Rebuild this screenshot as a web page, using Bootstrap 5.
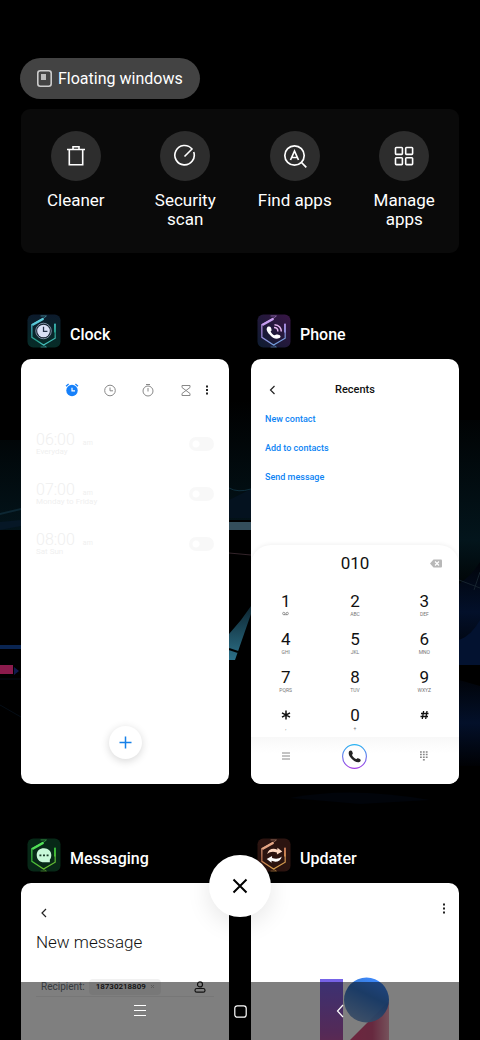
<!DOCTYPE html>
<html lang="en">
<head>
<meta charset="utf-8">
<meta name="viewport" content="width=device-width, initial-scale=1">
<title>Recent apps</title>
<link rel="stylesheet" href="https://cdn.jsdelivr.net/npm/bootstrap@5.3.0/dist/css/bootstrap.min.css">
<style>
body{background:#000;color:#fff;font-family:Roboto,"Liberation Sans",sans-serif;font-size:16px;line-height:20px}
button,input{font-family:inherit;color:inherit}
svg{display:block;flex:none}
.plain{border:0;background:none;padding:0}
.screen{height:100vh;padding:58px 21px 0;z-index:0}
.wallpaper{inset:0;width:100%;height:100%;z-index:-1}
.float-pill{height:41px;margin-left:-1px;padding:0 17px;gap:6px;background:#434343;font-size:16px}
.tools{margin-top:10px;min-height:144px;padding-top:22px;background:#0a0a0a;border-radius:9px;font-size:17px;line-height:19px}
.tool{flex:1 1 0;min-width:0}
.tool-label{width:76px;margin-top:10px}
.disc{width:50px;height:50px;background:#2d2d2d}
.apps{display:grid;grid-template-columns:1fr 1fr;column-gap:22px;row-gap:54px;margin-top:61px}
.app-head{height:34px;gap:9px;padding-left:6px;margin-bottom:11px;color:#fff}
.app-title{font-size:16px;font-weight:500;line-height:20px;margin:7px 0 0}
.pane{background:#fff;color:#111;border-radius:10px;min-height:425px;overflow:hidden}
.tabs{padding:24px 17px 0 44px}
.tab-set{gap:24px}
.alarms{margin-top:25px;padding:0 15px}
.alarm{height:50px;color:#efefef;padding-bottom:6px}
.alarm-time{font-size:16px;font-weight:300;line-height:16px}
.tiny{font-size:7px;line-height:8px}
.alarm-days{font-size:8px;line-height:8px}
.toggle{appearance:none;width:25px;height:14px;margin:0;border-radius:7px;background:radial-gradient(circle at 7px 7px,#fff 3px,#f8f8f8 4px)}
.fab{width:33px;height:33px;margin-bottom:25px;background:#fff;box-shadow:0 2px 9px rgba(0,0,0,.16)}
.pane-bar{display:grid;grid-template-columns:1fr auto 1fr;height:30px;margin-top:16px;padding:0 18px;font-size:11px;font-weight:500}
.actions{padding:0 14px}
.action{font-size:9px;font-weight:500;line-height:29px;color:#0d84f4;text-decoration:none}
.dialer{border-radius:20px 20px 0 0;box-shadow:0 -1px 4px rgba(0,0,0,.06)}
.dial-row{display:grid;grid-template-columns:1fr 1fr 1fr;height:40px;padding-bottom:4px}
.dial-number{font-size:17px;line-height:20px;min-width:0}
.keys{display:grid;grid-template-columns:1fr 1fr 1fr;grid-auto-rows:38px}
.digit{font-size:17px;line-height:20px;padding-top:6px;height:26px}
.letters{font-size:5px;line-height:6px;color:#777}
.dial-foot{display:grid;grid-template-columns:1fr 1fr 1fr;height:47px;padding-bottom:9px;background:linear-gradient(#f8f8f8,#fff 16px)}
.call{width:25px;height:25px}
.msg{padding:25px 15px 0}
.msg-title{font-size:17px;font-weight:300;line-height:20px;margin:14px 0 25px}
.recipient{height:20px;border-bottom:1px solid #eee;padding:0 8px 0 5px;font-size:10px;line-height:12px;gap:4px}
.chip{background:#f1f1f1;border-radius:4px;height:16px;padding:0 6px 0 7px}
.chip-number{width:54px;font-size:8px;font-weight:500}
.update-logo{margin-top:62px}
.close-all{width:62px;height:62px;left:50%;bottom:123px;margin-left:-31px;background:#fff;color:#000;z-index:3;box-shadow:0 6px 24px rgba(0,0,0,.1)}
.sysbar{position:fixed;left:0;right:0;bottom:0;height:58px;padding:0 90px;background:rgba(0,0,0,.5);z-index:2}
.sysbar .btn-cell{flex:1 1 0}
</style>
</head>
<body>
<svg width="0" height="0" class="position-absolute" aria-hidden="true">
  <defs>
    <linearGradient id="gc" gradientUnits="userSpaceOnUse" x1="6" y1="0" x2="20" y2="35"><stop offset="0" stop-color="#8cf0ff"/><stop offset=".35" stop-color="#48b9c8"/><stop offset=".7" stop-color="#249e88"/><stop offset="1" stop-color="#59d5dc"/></linearGradient>
    <linearGradient id="gp" gradientUnits="userSpaceOnUse" x1="6" y1="0" x2="20" y2="35"><stop offset="0" stop-color="#e6b2ff"/><stop offset=".5" stop-color="#a98be0"/><stop offset="1" stop-color="#63a4dc"/></linearGradient>
    <linearGradient id="gm" gradientUnits="userSpaceOnUse" x1="6" y1="0" x2="20" y2="35"><stop offset="0" stop-color="#6cff74"/><stop offset=".5" stop-color="#35bd39"/><stop offset="1" stop-color="#79bd31"/></linearGradient>
    <linearGradient id="gu" gradientUnits="userSpaceOnUse" x1="6" y1="0" x2="20" y2="35"><stop offset="0" stop-color="#ffd0b2"/><stop offset=".5" stop-color="#c87955"/><stop offset="1" stop-color="#dba94b"/></linearGradient>
    <linearGradient id="ring" x1="0" y1="0" x2="0" y2="1"><stop offset="0" stop-color="#27b3f2"/><stop offset="1" stop-color="#a43be4"/></linearGradient>
    <linearGradient id="tileC" x1="0" y1="0" x2="0" y2="1"><stop offset="0" stop-color="#0c1a2c"/><stop offset="1" stop-color="#062c27"/></linearGradient>
    <linearGradient id="tileP" x1="1" y1="0" x2="0" y2="1"><stop offset="0" stop-color="#381545"/><stop offset="1" stop-color="#0d1c30"/></linearGradient>
    <g id="hex" fill="none">
      <path d="M17 4 5 11v13l12 8 12-7V10" stroke-width="1.200"/>
      <path d="M5.500 11.500 17 5" stroke-width="2.200"/><path d="M28.700 10v9" stroke-width="1.800"/>
      <path d="M14 2h6l-3 2.500M14 34h6l-3-2" stroke-width=".8" opacity=".6"/>
    </g>
  </defs>
</svg>

<main class="screen position-relative overflow-hidden">
  <svg class="wallpaper position-absolute" viewBox="0 0 480 1040" preserveAspectRatio="xMidYMid slice" aria-hidden="true">
    <defs>
      <linearGradient id="w1" x1="0" y1="0" x2="0" y2="1"><stop offset="0" stop-color="#000"/><stop offset=".7" stop-color="#03151c"/><stop offset="1" stop-color="#000"/></linearGradient>
      <linearGradient id="w2" x1="0" y1="0" x2="0" y2="1"><stop offset="0" stop-color="#01040a"/><stop offset=".5" stop-color="#03102a"/><stop offset="1" stop-color="#000104"/></linearGradient>
      <linearGradient id="w3" x1="0" y1="0" x2="0" y2="1"><stop offset="0" stop-color="#0d2530"/><stop offset="1" stop-color="#2c7088"/></linearGradient>
    </defs>
    <path d="M0 440h21v90H0zM229 400h22v120h-22zM459 420h21v180h-21z" fill="url(#w1)"/>
    <path d="M0 513 21 508v2L0 515z" fill="#0d2733"/><path d="M0 522l21-2v6L0 530z" fill="#061726"/>
    <path d="M229 500l22-11v29h-22z" fill="#04121f"/>
    <path d="M229 488q9 5 22 1" stroke="#10303e" fill="none"/>
    <path d="M229 522h22v8h-22z" fill="#344e5b"/>
    <path d="M229 553l22 2" stroke="#33242a"/>
    <path d="M0 645h21v4H0z" fill="#0a2552"/>
    <path d="M0 665h13v9H0z" fill="#8b1b4c"/><path d="M14 667l5 4-5 4z" fill="#101a4d"/>
    <path d="M0 679h21M0 705l21 12" stroke="#050d16"/>
    <path d="M229 634 241 620 251 606v8l-16 46h-6z" fill="url(#w3)"/><path d="M229 649l9 3" stroke="#000" stroke-width="2"/>
    <path d="M459 584q12-8 21-22v100h-21z" fill="url(#w2)"/><path d="M459 640q12-4 21-20v45h-21z" fill="#031230"/>
    <path d="M459 680l21 6v80h-21z" fill="url(#w2)"/>
    <path d="M459 580l21 8M474 590l6-18" stroke="#16232e"/>
    <path d="M290 798q60-12 140 2l-70 4z" fill="#01040a"/>
  </svg>

  <button type="button" class="plain float-pill rounded-pill d-inline-flex align-items-center">
    <svg width="15" height="17" viewBox="0 0 15 17" fill="none" aria-hidden="true"><rect x=".8" y=".8" width="13.400" height="15.400" rx="2.500" stroke="#ccc" stroke-width="1.600"/><rect x="4" y="4" width="5" height="6" fill="#bbb"/></svg>
    Floating windows
  </button>

  <section class="tools d-flex align-items-start text-center" aria-label="Tools">
    <button type="button" class="plain tool d-flex flex-column align-items-center">
      <span class="disc rounded-circle d-flex align-items-center justify-content-center"><svg width="24" height="24" viewBox="0 0 24 24" fill="none" stroke="#fff" stroke-width="1.600" aria-hidden="true"><path d="M3 5.500h18M9 5V2.700h6V5M5.300 6v14.800h13.400V6"/></svg></span>
      <span class="tool-label">Cleaner</span>
    </button>
    <button type="button" class="plain tool d-flex flex-column align-items-center">
      <span class="disc rounded-circle d-flex align-items-center justify-content-center"><svg width="24" height="24" viewBox="0 0 24 24" fill="none" stroke="#fff" stroke-width="1.600" aria-hidden="true"><path d="M11.500 12.500 19 5A9.700 9.700 0 1 0 20.700 8"/></svg></span>
      <span class="tool-label">Security scan</span>
    </button>
    <button type="button" class="plain tool d-flex flex-column align-items-center">
      <span class="disc rounded-circle d-flex align-items-center justify-content-center"><svg width="24" height="24" viewBox="0 0 24 24" fill="none" stroke="#fff" stroke-width="1.700" aria-hidden="true"><circle cx="11.500" cy="11.500" r="9.700"/><path d="m18.500 18.500 4.800 4.800M7.500 16 11.500 7l4 9M9 13.500h5"/></svg></span>
      <span class="tool-label text-nowrap">Find apps</span>
    </button>
    <button type="button" class="plain tool d-flex flex-column align-items-center">
      <span class="disc rounded-circle d-flex align-items-center justify-content-center"><svg width="24" height="24" viewBox="0 0 24 24" fill="none" stroke="#fff" stroke-width="1.600" aria-hidden="true"><rect x="3.500" y="3.500" width="6.900" height="6.900" rx=".8"/><rect x="13.700" y="3.500" width="6.900" height="6.900" rx=".8"/><rect x="3.500" y="13.700" width="6.900" height="6.900" rx=".8"/><rect x="13.700" y="13.700" width="6.900" height="6.900" rx=".8"/></svg></span>
      <span class="tool-label">Manage apps</span>
    </button>
  </section>

  <div class="apps">
    <article class="d-flex flex-column">
      <header class="app-head d-flex align-items-center">
        <svg width="34" height="34" viewBox="0 0 35 35" aria-hidden="true"><rect x=".5" y=".5" width="34" height="34" rx="6" fill="url(#tileC)"/><use href="#hex" stroke="url(#gc)"/><circle cx="17" cy="17.500" r="8" fill="#14202e" stroke="#9bacc5" stroke-width=".8"/><circle cx="17" cy="17.500" r="6.500" fill="#d9dff5"/><path d="M17 13v5h4" fill="none" stroke="#253148" stroke-width="1.300"/></svg>
        <h2 class="app-title">Clock</h2>
      </header>
      <div class="pane flex-grow-1 d-flex flex-column">
        <div class="tabs d-flex align-items-center justify-content-between">
          <div class="tab-set d-flex">
            <button class="plain" type="button" aria-label="Alarm"><svg width="14" height="14" viewBox="0 0 14 14"><circle cx="7" cy="7.500" r="5.700" fill="#1680fa"/><path d="M1 3.200 3.600 1M13 3.200 10.400 1" stroke="#1680fa" stroke-width="1.300"/><path d="M7 4.700v3.200h3" fill="none" stroke="#fff" stroke-width="1.200"/></svg></button>
            <button class="plain" type="button" aria-label="World clock"><svg width="14" height="14" viewBox="0 0 14 14" fill="none" stroke="#888"><circle cx="7" cy="7.500" r="5.300"/><path d="M7 4.500v3.300h3"/></svg></button>
            <button class="plain" type="button" aria-label="Stopwatch"><svg width="14" height="14" viewBox="0 0 14 14" fill="none" stroke="#888"><circle cx="7" cy="8" r="5"/><path d="M7 5v3.500M5 1.500h4"/></svg></button>
            <button class="plain" type="button" aria-label="Timer"><svg width="14" height="14" viewBox="0 0 14 14" fill="none" stroke="#888"><path d="M3 2.500h8v2L7 7.500l-4-3zM3 12.500h8v-2L7 7.500l-4 3z"/></svg></button>
          </div>
          <button class="plain" type="button" aria-label="More options"><svg width="10" height="14" viewBox="0 0 10 14"><path d="M4 2.500h2v2H4zM4 6h2v2H4zM4 9.500h2v2H4z" fill="#222"/></svg></button>
        </div>
        <div class="alarms">
          <div class="alarm d-flex align-items-center justify-content-between"><label class="d-flex flex-wrap align-items-baseline column-gap-1" for="a6"><span class="alarm-time">06:00</span><span class="tiny ms-1">am</span><span class="alarm-days w-100">Everyday</span></label><input class="toggle" type="checkbox" role="switch" id="a6"></div>
          <div class="alarm d-flex align-items-center justify-content-between"><label class="d-flex flex-wrap align-items-baseline column-gap-1" for="a7"><span class="alarm-time">07:00</span><span class="tiny ms-1">am</span><span class="alarm-days w-100">Monday to Friday</span></label><input class="toggle" type="checkbox" role="switch" id="a7"></div>
          <div class="alarm d-flex align-items-center justify-content-between"><label class="d-flex flex-wrap align-items-baseline column-gap-1" for="a8"><span class="alarm-time">08:00</span><span class="tiny ms-1">am</span><span class="alarm-days w-100">Sat Sun</span></label><input class="toggle" type="checkbox" role="switch" id="a8"></div>
        </div>
        <button type="button" class="plain fab rounded-circle mt-auto mx-auto d-flex align-items-center justify-content-center" aria-label="Add alarm"><svg width="13" height="13" viewBox="0 0 13 13" stroke="#1680e8" stroke-width="1.500"><path d="M.5 6.500h12M6.500.5v12"/></svg></button>
      </div>
    </article>

    <article class="d-flex flex-column">
      <header class="app-head d-flex align-items-center">
        <svg width="34" height="34" viewBox="0 0 35 35" aria-hidden="true"><rect x=".5" y=".5" width="34" height="34" rx="6" fill="url(#tileP)"/><use href="#hex" stroke="url(#gp)"/><path d="M11 13c3-1 4 1 4 4l-1 1c1 2 2 3 4 4l2-1c3 0 5 1 4 3-3 3-8 1-11-3-3-3-4-6-2-8z" fill="#fff"/><path d="M17.500 14c3 0 4 2 4 4M18 11c5 0 7 4 7 7" fill="none" stroke="#e7b7f1" stroke-width="1.500"/></svg>
        <h2 class="app-title">Phone</h2>
      </header>
      <div class="pane flex-grow-1 d-flex flex-column">
        <div class="pane-bar align-items-center">
          <button type="button" class="plain text-start" aria-label="Back"><svg width="8" height="10" viewBox="0 0 8 10" fill="none" stroke="#222" stroke-width="1.200"><path d="M5.500 1 1.500 5l4 4"/></svg></button>
          <span>Recents</span>
        </div>
        <nav class="actions d-flex flex-column align-items-start" aria-label="Number actions">
          <a class="action" href="#">New contact</a>
          <a class="action" href="#">Add to contacts</a>
          <a class="action" href="#">Send message</a>
        </nav>
        <div class="dialer mt-auto">
          <div class="dial-row align-items-center">
            <span></span>
            <input class="plain dial-number text-center" value="010" aria-label="Number" readonly>
            <button type="button" class="plain d-flex justify-content-center ps-4" aria-label="Delete digit"><svg width="12" height="9" viewBox="0 0 12 9"><path d="M0 4.500 3.500.5H11q1 0 1 1v6q0 1-1 1H3.500z" fill="#b8b8b8"/><path d="m5 2.500 4 4M9 2.500l-4 4" stroke="#fff" stroke-width="1.200"/></svg></button>
          </div>
          <div class="keys">
            <button type="button" class="plain d-flex flex-column align-items-center"><span class="digit">1</span><svg width="7" height="5" viewBox="0 0 7 5" fill="none" stroke="#777" stroke-width=".7" aria-hidden="true"><circle cx="1.800" cy="2.500" r="1.200"/><circle cx="5.200" cy="2.500" r="1.200"/><path d="M1.800 3.700h3.400"/></svg></button>
            <button type="button" class="plain d-flex flex-column align-items-center"><span class="digit">2</span><span class="letters">ABC</span></button>
            <button type="button" class="plain d-flex flex-column align-items-center"><span class="digit">3</span><span class="letters">DEF</span></button>
            <button type="button" class="plain d-flex flex-column align-items-center"><span class="digit">4</span><span class="letters">GHI</span></button>
            <button type="button" class="plain d-flex flex-column align-items-center"><span class="digit">5</span><span class="letters">JKL</span></button>
            <button type="button" class="plain d-flex flex-column align-items-center"><span class="digit">6</span><span class="letters">MNO</span></button>
            <button type="button" class="plain d-flex flex-column align-items-center"><span class="digit">7</span><span class="letters">PQRS</span></button>
            <button type="button" class="plain d-flex flex-column align-items-center"><span class="digit">8</span><span class="letters">TUV</span></button>
            <button type="button" class="plain d-flex flex-column align-items-center"><span class="digit">9</span><span class="letters">WXYZ</span></button>
            <button type="button" class="plain d-flex flex-column align-items-center" aria-label="Star"><span class="digit d-flex align-items-center"><svg width="10" height="10" viewBox="0 0 10 10" stroke="#111" stroke-width="1.500"><path d="M5 .5v9M1 2.800l8 4.400M9 2.800 1 7.200"/></svg></span><span class="letters">,</span></button>
            <button type="button" class="plain d-flex flex-column align-items-center"><span class="digit">0</span><span class="letters">+</span></button>
            <button type="button" class="plain d-flex flex-column align-items-center" aria-label="Hash"><span class="digit d-flex align-items-center"><svg width="9" height="10" viewBox="0 0 9 10" stroke="#111" stroke-width="1.300"><path d="M3.600 1 2.300 9M7 1 5.700 9M1 3.500h7.500M.5 6.500H8"/></svg></span></button>
          </div>
          <div class="dial-foot">
            <button type="button" class="plain d-flex align-items-center justify-content-center" aria-label="Menu"><svg width="8" height="8" viewBox="0 0 8 8" stroke="#888"><path d="M0 1h8M0 4h8M0 7h8"/></svg></button>
            <button type="button" class="plain d-flex align-items-center justify-content-center" aria-label="Call"><svg class="call" viewBox="0 0 25 25"><circle cx="12.500" cy="12.500" r="11.900" fill="none" stroke="url(#ring)" stroke-width="1.100"/><path d="M7 7.500c1-1.500 2.700-1.300 3.200 0l.6 1.700c.2.800-.8 1.300-.8 1.800.7 1.800 2.200 3.200 4 4 .7 0 1.200-1 2-.7l1.900.8c1.300.8 1 2.400-.5 3-2.400.8-5.700-1-8-3.500C7.200 12.300 6 9.400 7 7.500z" fill="#222"/></svg></button>
            <button type="button" class="plain d-flex align-items-center justify-content-center" aria-label="Hide keypad"><svg width="8" height="10" viewBox="0 0 8 10" stroke="#888" stroke-width="1.500" stroke-dasharray="1.800 1.100"><path d="M0 1h8M0 3.600h8M0 6.200h8"/><path d="M2.900 8.800h1.900" stroke-dasharray="none"/></svg></button>
          </div>
        </div>
      </div>
    </article>

    <article class="d-flex flex-column">
      <header class="app-head d-flex align-items-center">
        <svg width="34" height="34" viewBox="0 0 35 35" aria-hidden="true"><rect x=".5" y=".5" width="34" height="34" rx="6" fill="#072817"/><use href="#hex" stroke="url(#gm)"/><path d="M17.500 10.500c4.500 0 7.500 3 7.500 7 0 3-1 4-1.500 5v2.500h-6c-4.500 0-7.500-3-7.500-7.500s3-7 7.500-7z" fill="#c8f8d9"/><path d="M12.800 18h2M16.500 18h2M20.200 18h2" stroke="#153525" stroke-width="1.800"/></svg>
        <h2 class="app-title">Messaging</h2>
      </header>
      <div class="pane flex-grow-1">
        <div class="msg">
          <button type="button" class="plain d-block ps-1" aria-label="Back"><svg width="8" height="10" viewBox="0 0 8 10" fill="none" stroke="#222" stroke-width="1.200"><path d="M6 1 2 5l4 4"/></svg></button>
          <h3 class="msg-title">New message</h3>
          <div class="recipient d-flex align-items-center">
            <label for="to" class="text-secondary">Recipient:</label>
            <span class="chip d-flex align-items-center"><input id="to" class="plain chip-number" value="18730218809"><button type="button" class="plain" aria-label="Remove recipient"><svg width="5" height="5" viewBox="0 0 5 5" stroke="#bbb"><path d="m1 1 3 3M4 1 1 4"/></svg></button></span>
            <button type="button" class="plain ms-auto" aria-label="Choose contact"><svg width="12" height="12" viewBox="0 0 12 12" fill="none" stroke="#222" stroke-width="1.200"><circle cx="6" cy="3.400" r="2.500"/><rect x="1" y="7.500" width="10" height="3.700" rx="1.800"/></svg></button>
          </div>
        </div>
      </div>
    </article>

    <article class="d-flex flex-column">
      <header class="app-head d-flex align-items-center">
        <svg width="34" height="34" viewBox="0 0 35 35" aria-hidden="true"><rect x=".5" y=".5" width="34" height="34" rx="6" fill="#2c1410"/><use href="#hex" stroke="url(#gu)"/><path d="M10.500 16.500c1-5 6-6.500 10.500-4.500v-2l5 4-5.500 3v-2c-4-1.300-7-1-10 1.500z" fill="#ffd9c2"/><path d="M25.500 19c-1 5-6 6.500-10.500 4.500v2l-5-4 5.500-3v2c4 1.300 7 1 10-1.500z" fill="#fff"/></svg>
        <h2 class="app-title">Updater</h2>
      </header>
      <div class="pane flex-grow-1 d-flex flex-column">
        <button type="button" class="plain align-self-end mt-3 pt-1 pe-2 me-1" aria-label="More options"><svg width="6" height="12" viewBox="0 0 6 12"><path d="M2 .5h2v2H2zM2 4.500h2v2H2zM2 8.500h2v2H2z" fill="#222"/></svg></button>
        <svg class="update-logo mx-auto" width="70" height="80" viewBox="0 0 70 80" role="img" aria-label="13">
          <defs><linearGradient id="u1" x1="0" y1="0" x2="0" y2="1"><stop offset="0" stop-color="#7563e8"/><stop offset=".7" stop-color="#aa54ae"/><stop offset="1" stop-color="#d55391"/></linearGradient>
          <linearGradient id="u2" x1="0" y1="0" x2="1" y2="0"><stop offset="0" stop-color="#e54880"/><stop offset=".7" stop-color="#ce527e"/><stop offset="1" stop-color="#eca4b7"/></linearGradient>
          <linearGradient id="u3" x1="0" y1="1" x2=".5" y2="0"><stop offset="0" stop-color="#87a5cd"/><stop offset=".7" stop-color="#2c70c9"/><stop offset="1" stop-color="#3280f5"/></linearGradient></defs>
          <path d="M0 2h23v78H0z" fill="url(#u1)"/><path d="M69 24v56H13z" fill="url(#u2)"/><circle cx="46.500" cy="23" r="22.500" fill="url(#u3)" fill-opacity=".95"/>
        </svg>
      </div>
    </article>
  </div>

  <button type="button" class="plain close-all position-fixed rounded-circle d-flex align-items-center justify-content-center" aria-label="Close all"><svg width="16" height="16" viewBox="0 0 16 16" stroke="currentColor" stroke-width="2"><path d="m1.500 1.500 13 13M14.500 1.500l-13 13"/></svg></button>
  <nav class="sysbar d-flex" aria-label="System">
    <button type="button" class="plain btn-cell d-flex align-items-center justify-content-center" aria-label="Recents"><svg width="12" height="12" viewBox="0 0 12 12" stroke="#fff"><path d="M0 .5h12M0 5.500h12M0 10.500h12"/></svg></button>
    <button type="button" class="plain btn-cell d-flex align-items-center justify-content-center" aria-label="Home"><svg width="13" height="13" viewBox="0 0 13 13" fill="none" stroke="#fff" stroke-width="1.200"><rect x=".8" y=".8" width="11.400" height="11.400" rx="2.500"/></svg></button>
    <button type="button" class="plain btn-cell d-flex align-items-center justify-content-center" aria-label="Back"><svg width="8" height="14" viewBox="0 0 8 14" fill="none" stroke="#fff" stroke-width="1.200"><path d="M7 1 1.500 7 7 13"/></svg></button>
  </nav>
</main>
<script src="https://cdn.jsdelivr.net/npm/bootstrap@5.3.0/dist/js/bootstrap.bundle.min.js"></script>
</body>
</html>
